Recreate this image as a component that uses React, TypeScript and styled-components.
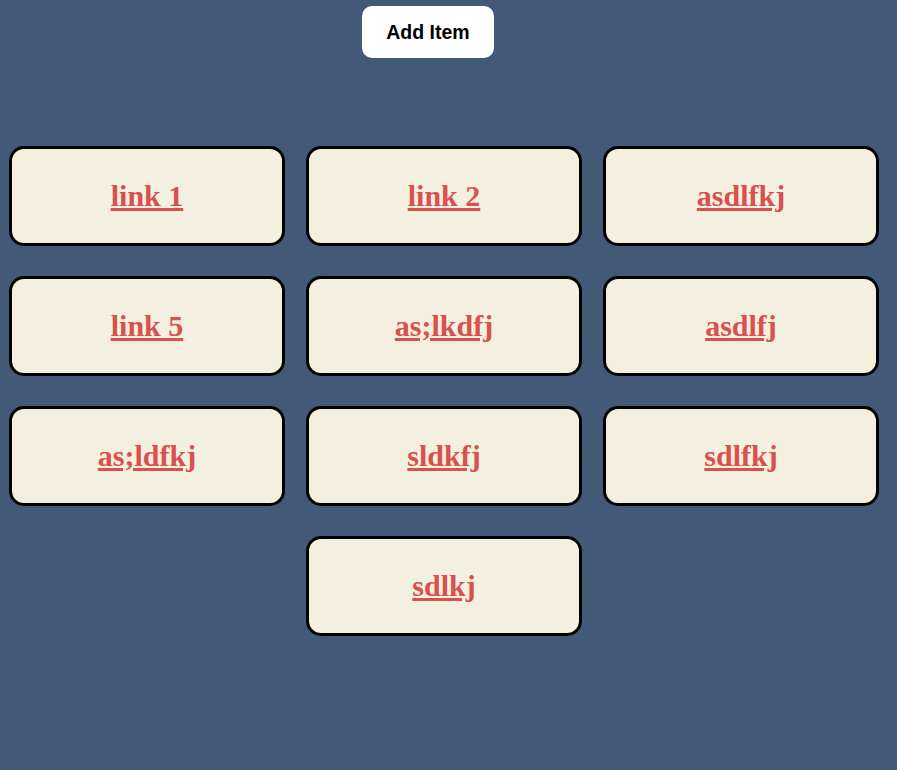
import React from 'react'
import styled, { createGlobalStyle } from 'styled-components'

const GlobalStyle = createGlobalStyle`
  html, body {
    margin: 0;
    padding: 0;
    background-color: #425a78;
    min-height: 100%;
  }
  body {
    font-family: "Liberation Serif", "Times New Roman", serif;
  }
`

const Page = styled.div`
  width: 897px;
  height: 770px;
  background-color: #425a78;
  padding: 6px 0 0 9px;
  box-sizing: border-box;
`

const AddBtn = styled.button`
  display: block;
  margin-left: 353px;
  width: 132px;
  height: 52px;
  border: none;
  border-radius: 10px;
  background: #ffffff;
  color: #000000;
  font-family: "Liberation Sans", Arial, sans-serif;
  font-size: 19.5px;
  font-weight: bold;
  cursor: pointer;
`

const Grid = styled.div`
  width: 870px;
  margin-top: 88px;
  display: flex;
  flex-wrap: wrap;
  justify-content: center;
  column-gap: 21px;
  row-gap: 30px;
`

const Card = styled.div`
  width: 276px;
  height: 100px;
  box-sizing: border-box;
  border: 3px solid #000;
  border-radius: 15px;
  background: #f4f0df;
  display: flex;
  align-items: center;
  justify-content: center;
`

const Link = styled.a`
  font-family: "Liberation Serif", "Times New Roman", serif;
  font-size: 30px;
  font-weight: bold;
  color: #d9504f;
  text-decoration: underline;
`

const items = ['link 1', 'link 2', 'asdlfkj', 'link 5', 'as;lkdfj', 'asdlfj', 'as;ldfkj', 'sldkfj', 'sdlfkj', 'sdlkj']

export default function App() {
  return (
    <>
      <GlobalStyle />
      <Page>
        <AddBtn>Add Item</AddBtn>
        <Grid>
          {items.map((label, i) => (
            <Card key={i}>
              <Link href="#">{label}</Link>
            </Card>
          ))}
        </Grid>
      </Page>
    </>
  )
}
